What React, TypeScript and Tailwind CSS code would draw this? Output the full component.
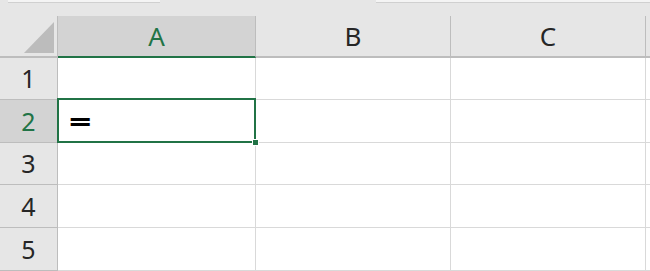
import React from "react";

const font = { fontFamily: '"Noto Sans", "Open Sans", Arial, sans-serif' };

function RowHeader({ n, sel, h }: { n: number; sel?: boolean; h: string }) {
  return (
    <div
      className={`${h} flex items-center justify-center border-r border-b ${
        sel
          ? "bg-[#d3d3d3] text-[#217346] border-r-[#217346] border-b-[#bdbdbd]"
          : "bg-[#e6e6e6] text-[#262626] border-[#bdbdbd]"
      } text-[25px] leading-none`}
    >
      {n}
    </div>
  );
}

function Cell({ h, children }: { h: string; children?: React.ReactNode }) {
  return <div className={`${h} border-r border-b border-[#d9d9d9] bg-white`}>{children}</div>;
}

export default function App() {
  const rows = [
    { n: 1, h: "h-[42px]" },
    { n: 2, h: "h-[43px]" },
    { n: 3, h: "h-[42px]" },
    { n: 4, h: "h-[43px]" },
    { n: 5, h: "h-[43px]" },
  ];
  return (
    <div className="w-[650px] h-[271px] overflow-hidden bg-[#e6e6e6]" style={font}>
      {/* top strip */}
      <div className="h-[16px] flex items-start gap-[216px] pl-[8px]">
        <div className="w-[152px] h-[3px] bg-[#f4f4f4] border-b border-[#d0d0d0]" />
        <div className="flex-1 h-[3px] bg-[#f4f4f4] border-b border-[#d0d0d0]" />
      </div>
      <div className="grid grid-cols-[58px_198px_195px_195px_4px]">
        {/* header row */}
        <div className="h-[42px] border-r border-b-2 border-[#bdbdbd] bg-[#e6e6e6] flex items-end justify-end pr-[2px] pb-[3px]">
          <svg width="31" height="31" viewBox="0 0 31 31">
            <polygon points="30,0 30,31 0,31" fill="#bcbcbc" />
          </svg>
        </div>
        <div className="h-[42px] bg-[#d3d3d3] border-r border-[#bdbdbd] border-b-2 border-b-[#217346] flex items-center justify-center text-[#217346] text-[26px] leading-none">
          A
        </div>
        <div className="h-[42px] bg-[#e6e6e6] border-r border-b-2 border-[#bdbdbd] flex items-center justify-center text-[#262626] text-[26px] leading-none">
          B
        </div>
        <div className="h-[42px] bg-[#e6e6e6] border-r border-b-2 border-[#bdbdbd] flex items-center justify-center text-[#262626] text-[26px] leading-none">
          C
        </div>
        <div className="h-[42px] bg-[#e6e6e6] border-b-2 border-[#bdbdbd]" />

        {rows.map((r) => (
          <React.Fragment key={r.n}>
            <RowHeader n={r.n} sel={r.n === 2} h={r.h} />
            {r.n === 2 ? (
              <div className={`${r.h} relative border-r border-b border-[#d9d9d9] bg-white`}>
                <div className="absolute left-[-1px] top-[-2px] right-[-1px] bottom-[-1px] border-2 border-[#217346] flex items-center pl-[10px]">
                  <span className="inline-block origin-left scale-x-[1.4] font-bold text-black text-[28px] leading-none">=</span>
                </div>
                <div className="absolute right-[-4px] bottom-[-4px] w-[7px] h-[7px] bg-[#217346] border border-white" />
              </div>
            ) : (
              <Cell h={r.h} />
            )}
            <Cell h={r.h} />
            <Cell h={r.h} />
            <div className={`${r.h} border-b border-[#d9d9d9] bg-white`} />
          </React.Fragment>
        ))}
      </div>
    </div>
  );
}
